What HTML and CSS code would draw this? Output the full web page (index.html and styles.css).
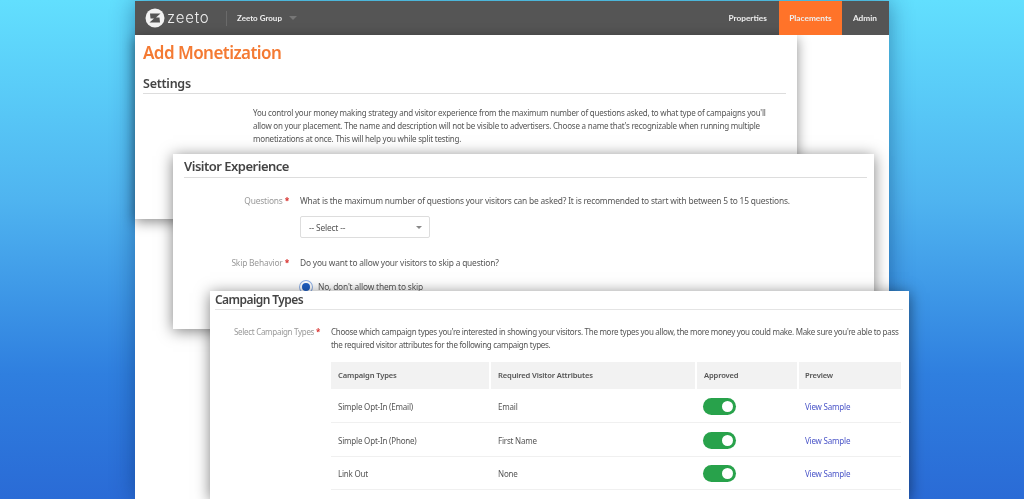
FILE: index.html
```html
<!DOCTYPE html>
<html lang="en">
<head>
    <meta charset="UTF-8">
    <title>Add Monetization</title>
    <link rel="stylesheet" href="styles.css">
</head>
<body>
    <div class="app-window">
        <div class="navbar">
            <div class="logo">
                <svg class="logo-mark" width="20" height="20" viewBox="0 0 20 20">
                    <circle cx="10" cy="10" r="9.5" fill="#f2f2f2"/>
                    <path d="M5 5.5H15.5L11 9.6H14.5L15 14.5H4.5L9 10.4H5.5Z" fill="#555"/>
                </svg>
                <span class="logo-text">zeeto</span>
            </div>
            <div class="group-menu">
                <span>Zeeto Group</span>
                <span class="caret"></span>
            </div>
            <div class="nav-links">
                <a class="nav-link">Properties</a>
                <a class="nav-link active">Placements</a>
                <a class="nav-link">Admin</a>
            </div>
        </div>
        <div class="settings-card">
            <h1>Add Monetization</h1>
            <h2>Settings</h2>
            <p class="settings-text">You control your money making strategy and visitor experience from the maximum number of questions asked, to what type of campaigns you'll<br>allow on your placement. The name and description will not be visible to advertisers. Choose a name that's recognizable when running multiple<br>monetizations at once. This will help you while split testing.</p>
        </div>
    </div>

    <div class="card visitor-card">
        <h2>Visitor Experience</h2>
        <div class="form-row">
            <div class="form-label">Questions <span class="req">*</span></div>
            <div class="form-body">
                <p>What is the maximum number of questions your visitors can be asked? It is recommended to start with between 5 to 15 questions.</p>
                <div class="select-box">
                    <span>-- Select --</span>
                    <span class="caret grey"></span>
                </div>
            </div>
        </div>
        <div class="form-row skip-row">
            <div class="form-label">Skip Behavior <span class="req">*</span></div>
            <div class="form-body">
                <p>Do you want to allow your visitors to skip a question?</p>
                <div class="radio-row">
                    <span class="radio"></span>
                    <span>No, don't allow them to skip</span>
                </div>
            </div>
        </div>
    </div>

    <div class="card campaign-card">
        <h2>Campaign Types</h2>
        <div class="form-row">
            <div class="form-label">Select Campaign Types <span class="req">*</span></div>
            <div class="form-body">
                <p>Choose which campaign types you're interested in showing your visitors. The more types you allow, the more money you could make. Make sure you're able to pass<br>the required visitor attributes for the following campaign types.</p>
                <table class="campaign-table">
                    <thead>
                        <tr>
                            <th class="col-type">Campaign Types</th>
                            <th class="col-attr">Required Visitor Attributes</th>
                            <th class="col-appr">Approved</th>
                            <th class="col-prev">Preview</th>
                        </tr>
                    </thead>
                    <tbody>
                        <tr>
                            <td>Simple Opt-In (Email)</td>
                            <td>Email</td>
                            <td><span class="toggle"></span></td>
                            <td><a class="sample">View Sample</a></td>
                        </tr>
                        <tr>
                            <td>Simple Opt-In (Phone)</td>
                            <td>First Name</td>
                            <td><span class="toggle"></span></td>
                            <td><a class="sample">View Sample</a></td>
                        </tr>
                        <tr class="last-row">
                            <td>Link Out</td>
                            <td>None</td>
                            <td><span class="toggle"></span></td>
                            <td><a class="sample">View Sample</a></td>
                        </tr>
                    </tbody>
                </table>
            </div>
        </div>
    </div>
</body>
</html>
```

FILE: styles.css
```css
html, body {
    margin: 0;
    height: 100%;
}
body {
    position: relative;
    width: 1024px;
    height: 499px;
    overflow: hidden;
    font-family: "Noto Sans", "Open Sans", sans-serif;
    color: #555;
    background: linear-gradient(180deg, #62dffe 0%, #4fb4f0 40%, #2f7fdf 75%, #2a6bd6 100%);
}
p {
    margin: 0;
}

/* back window */
.app-window {
    position: absolute;
    left: 135px;
    top: 1px;
    width: 754px;
    height: 498px;
    background: #fff;
    box-shadow: 0 0 22px rgba(0, 40, 90, 0.45);
    filter: blur(0.35px);
}
.navbar {
    display: flex;
    align-items: center;
    height: 34px;
    padding-left: 10px;
    font-family: "Lato", sans-serif;
    background-color: #555;
    color: #fff;
}
.logo {
    display: flex;
    align-items: center;
    gap: 2px;
    width: 81px;
}
.logo-text {
    font-family: "Inter", sans-serif;
    font-size: 15px;
    font-weight: 300;
    letter-spacing: 0.8px;
    line-height: 20px;
    color: #eee;
}
.group-menu {
    display: flex;
    align-items: center;
    gap: 7px;
    height: 15px;
    padding-left: 10px;
    border-left: 1px solid #6a6a6a;
    font-size: 8px;
    font-weight: 700;
    color: #eee;
}
.caret {
    width: 0;
    height: 0;
    border-left: 4px solid transparent;
    border-right: 4px solid transparent;
    border-top: 4px solid #777;
}
.caret.grey {
    border-left-width: 3px;
    border-right-width: 3px;
    border-top-width: 3px;
    border-top-color: #888;
}
.nav-links {
    display: flex;
    margin-left: auto;
    height: 100%;
}
.nav-link {
    display: flex;
    align-items: center;
    padding: 0 12px 0 11px;
    font-size: 8.3px;
    font-weight: 700;
    color: #eee;
}
.nav-link.active {
    width: 63px;
    padding: 0;
    justify-content: center;
    background-color: #ff7329;
}
.settings-card {
    width: 662px;
    height: 184px;
    box-sizing: border-box;
    padding: 0 11px 0 8px;
    background: #fff;
    box-shadow: 0 3px 12px rgba(0, 0, 0, 0.45);
}
h1 {
    margin: 0;
    padding-top: 6px;
    font-size: 17px;
    letter-spacing: -0.55px;
    line-height: 23px;
    font-weight: 600;
    color: #f47a33;
}
h2 {
    margin: 0;
    font-weight: 600;
    color: #444;
}
.settings-card h2 {
    margin-top: 11px;
    height: 18px;
    font-size: 12.5px;
    letter-spacing: -0.25px;
    line-height: 18px;
    border-bottom: 1px solid #ddd;
}
.settings-text {
    margin: 12px 0 0 110px;
    font-size: 8px;
    letter-spacing: -0.22px;
    line-height: 13px;
    white-space: nowrap;
}

/* floating cards */
.card {
    position: absolute;
    box-sizing: border-box;
    background: #fff;
    box-shadow: 0 2px 14px rgba(0, 0, 0, 0.5);
    filter: blur(0.35px);
}
.visitor-card {
    left: 173px;
    top: 154px;
    width: 701px;
    height: 175px;
    padding: 2px 7px 0 11px;
    font-size: 8.4px;
    letter-spacing: -0.18px;
}
.visitor-card h2 {
    height: 21px;
    font-size: 13px;
    letter-spacing: -0.5px;
    line-height: 20px;
    border-bottom: 1px solid #ddd;
}
.campaign-card {
    left: 210px;
    top: 291px;
    width: 699px;
    height: 208px;
    padding: 0 6px 0 5px;
    font-size: 8px;
    letter-spacing: -0.29px;
}
.campaign-card h2 {
    height: 18px;
    font-size: 12px;
    letter-spacing: -0.57px;
    line-height: 17px;
    border-bottom: 1px solid #e4e4e4;
}
.form-row {
    display: flex;
    margin-top: 16px;
    line-height: 13px;
}
.visitor-card .skip-row {
    margin-top: 18px;
}
.form-label {
    flex: none;
    width: 105px;
    text-align: right;
    color: #999;
}
.req {
    color: #d8322f;
    font-weight: 700;
}
.form-body {
    margin-left: 11px;
    white-space: nowrap;
}
.select-box {
    display: flex;
    align-items: center;
    justify-content: space-between;
    box-sizing: border-box;
    width: 130px;
    height: 22px;
    margin-top: 9px;
    padding: 0 7px 0 8px;
    border: 1px solid #ddd;
    border-radius: 2px;
}
.radio-row {
    display: flex;
    align-items: center;
    gap: 6px;
    margin-top: 11px;
}
.radio {
    box-sizing: border-box;
    width: 12px;
    height: 12px;
    border-radius: 50%;
    background: #1f5fc4;
    border: 2px solid #fff;
    box-shadow: 0 0 0 1px #8fb0e6;
}
.campaign-card .form-row {
    margin-top: 15px;
}
.campaign-table {
    margin-top: 11px;
    width: 570px;
    border-collapse: separate;
    border-spacing: 0;
    table-layout: fixed;
    font-size: 8px;
    letter-spacing: -0.2px;
}
.campaign-table th {
    box-sizing: border-box;
    height: 27px;
    padding: 0 7px;
    text-align: left;
    font-size: 7.6px;
    letter-spacing: -0.15px;
    font-weight: 600;
    color: #555;
    background-color: #f2f2f2;
    border-right: 2px solid #fff;
}
.campaign-table td {
    box-sizing: border-box;
    height: 34px;
    padding: 1px 7px 0;
    border-bottom: 1px solid #f0f0f0;
}
.campaign-table .last-row td {
    height: 33px;
}
.col-type {
    width: 160px;
}
.col-attr {
    width: 206px;
}
.col-appr {
    width: 102px;
}
.campaign-table .col-prev {
    width: 102px;
    padding-left: 6px;
    border-right: 0;
}
.campaign-table td:last-child {
    padding-left: 6px;
}
.toggle {
    position: relative;
    display: block;
    width: 33px;
    height: 17px;
    margin-left: -1px;
    border-radius: 9px;
    background-color: #28a24b;
}
.toggle::after {
    content: "";
    position: absolute;
    top: 3px;
    right: 3px;
    width: 11px;
    height: 11px;
    border-radius: 50%;
    background: #fff;
}
.sample {
    color: #4a55c8;
}
```
